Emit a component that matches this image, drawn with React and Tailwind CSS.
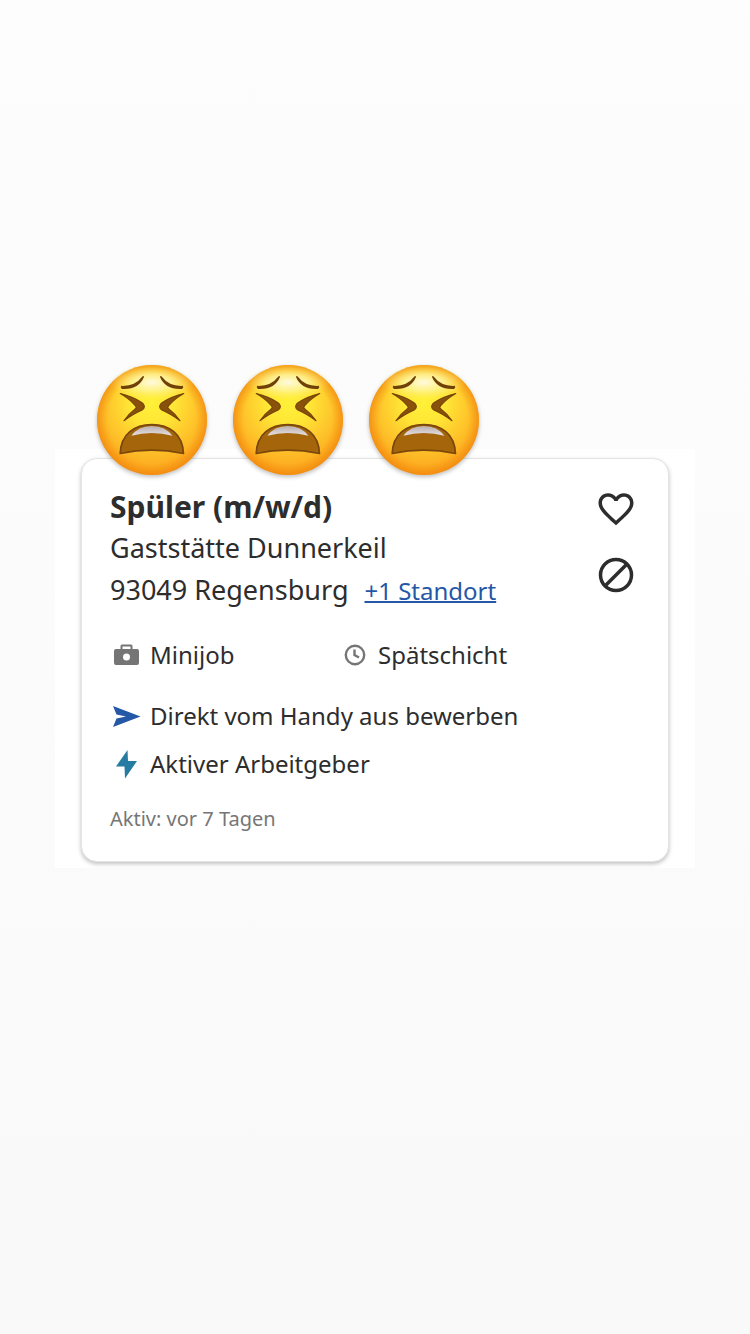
import React from "react";
import { MdFavoriteBorder } from "react-icons/md";

const EMOJIS = ["a", "b", "c"];

function TiredFace({ id }) {
  return (
    <svg viewBox="0 0 327 327" className="size-[110px] drop-shadow-[0_2px_2px_rgba(0,0,0,0.25)]" role="img" aria-hidden="true">
      <defs>
        <radialGradient id={`face-${id}`} cx="0.5" cy="0.34" r="0.66">
          <stop offset="0" stopColor="#fff038" />
          <stop offset="0.3" stopColor="#ffe636" />
          <stop offset="0.65" stopColor="#fec32a" />
          <stop offset="1" stopColor="#fb9f1a" />
        </radialGradient>
        <radialGradient id={`rim-${id}`} cx="0.5" cy="0.5" r="0.5">
          <stop offset="0.8" stopColor="#f58a0c" stopOpacity="0" />
          <stop offset="1" stopColor="#ee820c" stopOpacity="0.65" />
        </radialGradient>
        <radialGradient id={`shine-${id}`} cx="0.5" cy="0.5" r="0.5">
          <stop offset="0" stopColor="#fffce8" stopOpacity="0.95" />
          <stop offset="0.5" stopColor="#fff8b8" stopOpacity="0.6" />
          <stop offset="1" stopColor="#fff27a" stopOpacity="0" />
        </radialGradient>
        <linearGradient id={`teeth-${id}`} x1="0" y1="0" x2="0" y2="1">
          <stop offset="0" stopColor="#b9aeac" />
          <stop offset="1" stopColor="#e6e1e3" />
        </linearGradient>
      </defs>
      <circle cx="163.500" cy="163.500" r="163.500" fill={`url(#face-${id})`} />
      <circle cx="163.500" cy="163.500" r="163.500" fill={`url(#rim-${id})`} />
      <ellipse cx="163" cy="52" rx="125" ry="50" fill={`url(#shine-${id})`} />
      <g fill="#6f4008">
        <path d="M72 62 Q112 64 135 34 Q138 31 140 35 Q124 74 74 71 Q68 67 72 62Z" />
        <path d="M255 62 Q215 64 192 34 Q189 31 187 35 Q203 74 253 71 Q259 67 255 62Z" />
      </g>
      <g fill="#8a510a" stroke="#6f4008" strokeWidth="3" strokeLinejoin="round">
        <path d="M69 85 Q106 94 134 112 Q148 123 134 134 Q110 144 80 166 Q96 143 116 128 Q117 125 114 121 Q95 99 69 85Z" />
        <path d="M258 85 Q221 94 193 112 Q179 123 193 134 Q217 144 247 166 Q231 143 211 128 Q210 125 213 121 Q232 99 258 85Z" />
      </g>
      <path d="M69 263 C71 205 112 177 163 177 C214 177 255 205 257 263 Q163 243 69 263Z" fill="#a5650b" stroke="#79470d" strokeWidth="5" strokeLinejoin="round" />
      <path d="M102 210 Q122 182 163 181 Q204 182 224 210 Q163 194 102 210Z" fill={`url(#teeth-${id})`} />
    </svg>
  );
}

function BlockIcon() {
  return (
    <svg viewBox="0 0 42 42" className="size-[42px]" fill="none" stroke="currentColor" strokeWidth="3.500" aria-hidden="true">
      <circle cx="21" cy="21" r="15.500" />
      <path d="M10 32 L32 10" />
    </svg>
  );
}

function BriefcaseIcon() {
  return (
    <svg viewBox="0 0 32 32" className="size-8 shrink-0 text-[#757575]" fill="currentColor" aria-hidden="true">
      <path fillRule="evenodd" d="M10.500 10 V7 Q10.500 5.500 12 5.500 H21 Q22.500 5.500 22.500 7 V10 H27 Q29 10 29 12 V24 Q29 26 27 26 H6 Q4 26 4 24 V12 Q4 10 6 10Z M12.500 7.500 V10 H20.500 V7.500Z M16.500 14.500 A3.500 3.500 0 1 0 16.500 21.500 A3.500 3.500 0 1 0 16.500 14.500Z" />
    </svg>
  );
}

function ClockIcon() {
  return (
    <svg viewBox="0 0 22 22" className="size-[22px] shrink-0 text-[#757575]" fill="none" stroke="currentColor" strokeWidth="2.400" aria-hidden="true">
      <circle cx="11" cy="11" r="9.200" />
      <path d="M10.500 5.500 V11 L15 13.500" />
    </svg>
  );
}

function SendIcon() {
  return (
    <svg viewBox="0 0 32 32" className="size-8 shrink-0 text-[#2557a7]" fill="currentColor" aria-hidden="true">
      <path d="M3 6 L30.500 16.500 L3 27 L6.500 18.500 L16 16.500 L6.500 14.500Z" />
    </svg>
  );
}

function BoltIcon() {
  return (
    <svg viewBox="0 0 32 32" className="size-8 shrink-0 text-[#267ba3]" fill="currentColor" aria-hidden="true">
      <path d="M17.500 2 L6 18.500 H14.500 L15 30.500 L27 13 H18Z" />
    </svg>
  );
}

export default function App() {
  return (
    <main className="min-h-screen bg-linear-to-b from-[#fdfdfd] to-[#f9f9f9] pt-[365px] font-['Noto_Sans',sans-serif] text-[#2d2d2d]">
      <div className="relative z-10 flex gap-[26px] pl-[97px]">
        {EMOJIS.map((id) => <TiredFace key={id} id={id} />)}
      </div>

      <div className="-mt-[26px] mx-[55px] bg-white px-[26px] pt-[9px] pb-[6px]">
        <article className="flex justify-between rounded-2xl border border-[#e4e4e4] bg-white pt-7 pr-[31px] pb-7 pl-7 shadow-[0_2px_4px_rgba(0,0,0,0.25)]">
          <div>
            <h2 className="text-[30px] leading-10 font-bold">Spüler (m/w/d)</h2>
            <p className="text-[27px] leading-[42px]">Gaststätte Dunnerkeil</p>
            <p className="text-[27px] leading-[42px]">
              93049 Regensburg
              <a href="#standorte" className="ml-4 text-2xl text-[#2557a7] underline decoration-2">+1 Standort</a>
            </p>

            <div className="mt-7 flex text-2xl leading-8">
              <div className="flex w-[234px] items-center gap-2"><BriefcaseIcon />Minijob</div>
              <div className="flex items-center gap-3"><ClockIcon />Spätschicht</div>
            </div>

            <div className="mt-[29px] flex items-center gap-2 text-2xl leading-8"><SendIcon />Direkt vom Handy aus bewerben</div>
            <div className="mt-4 flex items-center gap-2 text-2xl leading-8"><BoltIcon />Aktiver Arbeitgeber</div>

            <p className="mt-[25px] text-xl leading-7 text-[#767676]">Aktiv: vor 7 Tagen</p>
          </div>

          <div className="flex flex-col gap-6 pt-px">
            <button type="button" aria-label="Job merken"><MdFavoriteBorder className="size-[42px]" /></button>
            <button type="button" aria-label="Job ausblenden"><BlockIcon /></button>
          </div>
        </article>
      </div>
    </main>
  );
}
